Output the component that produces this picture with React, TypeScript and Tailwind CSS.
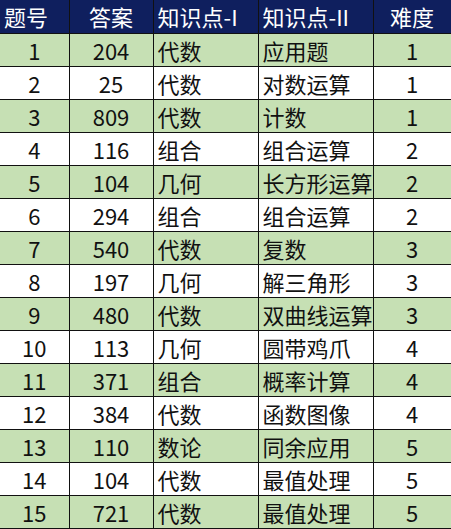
import React from "react";

const rows: [number, number, string, string, number][] = [
  [1, 204, "代数", "应用题", 1],
  [2, 25, "代数", "对数运算", 1],
  [3, 809, "代数", "计数", 1],
  [4, 116, "组合", "组合运算", 2],
  [5, 104, "几何", "长方形运算", 2],
  [6, 294, "组合", "组合运算", 2],
  [7, 540, "代数", "复数", 3],
  [8, 197, "几何", "解三角形", 3],
  [9, 480, "代数", "双曲线运算", 3],
  [10, 113, "几何", "圆带鸡爪", 4],
  [11, 371, "组合", "概率计算", 4],
  [12, 384, "代数", "函数图像", 4],
  [13, 110, "数论", "同余应用", 5],
  [14, 104, "代数", "最值处理", 5],
  [15, 721, "代数", "最值处理", 5],
];

export default function App() {
  return (
    <div
      className="w-[451px] h-[529px] bg-white overflow-hidden"
      style={{ fontFamily: '"Noto Sans CJK SC", "Noto Sans", sans-serif' }}
    >
      <table className="w-[451px] table-fixed border-collapse text-[22px] leading-none">
        <colgroup>
          <col className="w-[69px]" />
          <col className="w-[84px]" />
          <col className="w-[105px]" />
          <col className="w-[115px]" />
          <col className="w-[78px]" />
        </colgroup>
        <thead>
          <tr className="h-[33px] bg-[#0f1f5e] text-white">
            <th className="font-normal text-left pl-[4px] border-r border-b border-[#111]">题号</th>
            <th className="font-normal text-center border-r border-b border-[#111]">答案</th>
            <th className="font-normal text-left pl-[4px] border-r border-b border-[#111]">知识点-I</th>
            <th className="font-normal text-left pl-[4px] border-r border-b border-[#111]">知识点-II</th>
            <th className="font-normal text-center border-r border-b border-[#111]">难度</th>
          </tr>
        </thead>
        <tbody className="text-[#111]">
          {rows.map(([no, ans, k1, k2, diff]) => (
            <tr key={no} className={no % 2 === 1 ? "h-[33px] bg-[#c6e0b4]" : "h-[33px] bg-white"}>
              <td className="text-center border-r border-b border-[#111]">{no}</td>
              <td className="text-center border-r border-b border-[#111]">{ans}</td>
              <td className="text-left pl-[4px] border-r border-b border-[#111]">{k1}</td>
              <td className="text-left pl-[4px] border-r border-b border-[#111] whitespace-nowrap">{k2}</td>
              <td className="text-center border-r border-b border-[#111]">{diff}</td>
            </tr>
          ))}
        </tbody>
      </table>
    </div>
  );
}
